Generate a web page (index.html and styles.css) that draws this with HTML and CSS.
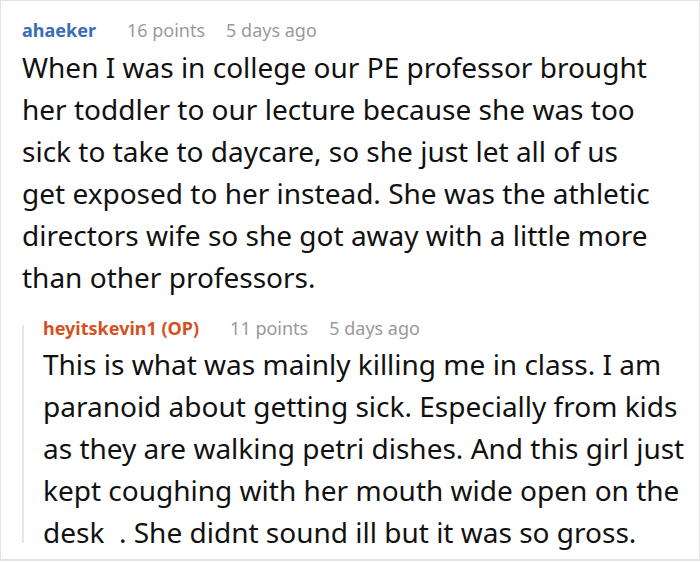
FILE: index.html
```html
<!DOCTYPE html>
<html>
<head>
<meta charset="utf-8">
<link rel="stylesheet" href="styles.css">
</head>
<body>
<div class="thread">
  <div class="comment">
    <div class="meta">
      <span class="author">ahaeker</span>
      <span class="info">16 points</span>
      <span class="info">5 days ago</span>
    </div>
    <p class="text">When I was in college our PE professor brought her toddler to our lecture because she was too sick to take to daycare, so she just let all of us get exposed to her instead. She was the athletic directors wife so she got away with a little more than other professors.</p>
    <div class="reply">
      <div class="meta">
        <span class="author op">heyitskevin1 (OP)</span>
        <span class="info">11 points</span>
        <span class="info">5 days ago</span>
      </div>
      <p class="text">This is what was mainly killing me in class. I am paranoid about getting sick. Especially from kids as they are walking petri dishes. And this girl just kept coughing with her mouth wide open on the desk&nbsp;&nbsp;. She didnt sound ill but it was so gross.</p>
    </div>
  </div>
</div>
</body>
</html>
```
FILE: styles.css
```css
html, body {
  margin: 0;
  padding: 0;
  background: #fff;
}
.thread {
  box-sizing: border-box;
  width: 700px;
  height: 561px;
  border: 1px solid #e3e3e3;
  border-bottom-width: 2px;
  font-family: "Noto Sans", "Open Sans", sans-serif;
  color: #111;
  overflow: hidden;
}
.comment {
  padding: 16px 0 0 21px;
}
.meta {
  display: flex;
  gap: 21px;
  font-size: 18px;
  line-height: 26px;
}
.author {
  font-weight: bold;
  color: #3a6db5;
  margin-right: 10px;
}
.author.op {
  color: #d4511d;
}
.info {
  color: #9a9a9a;
}
.text {
  margin: 3px 0 0;
  max-width: 634px;
  font-size: 28px;
  line-height: 42px;
}
.reply {
  display: flow-root;
  margin-top: 27px;
  border-left: 2px solid #e6e6e6;
  padding-left: 19px;
}
.reply .meta {
  margin-top: -10px;
}
.reply .text {
  max-width: none;
  margin: 2px 0 -10px;
}
```
